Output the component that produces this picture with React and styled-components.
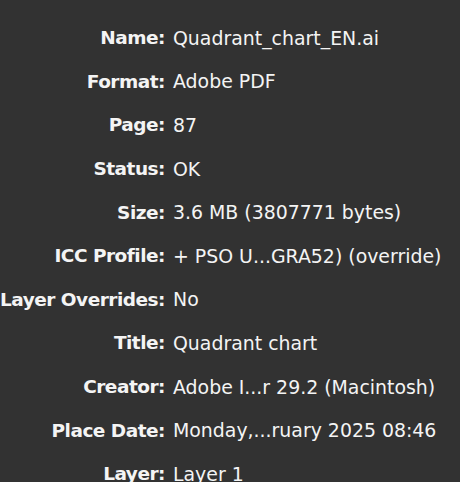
import React from 'react';
import styled, { createGlobalStyle } from 'styled-components';

const GlobalStyle = createGlobalStyle`
  html, body {
    margin: 0;
    padding: 0;
    background: #323232;
    overflow: hidden;
  }
`;

const Panel = styled.section`
  width: 460px;
  height: 482px;
  box-sizing: border-box;
  padding-top: 16px;
  overflow: hidden;
  font-family: "DejaVu Sans", "Open Sans", sans-serif;
  color: #f4f4f4;
`;

const Row = styled.div`
  display: grid;
  grid-template-columns: 165px 1fr;
  column-gap: 8px;
  height: 43.6px;
  align-items: center;
  white-space: nowrap;
`;

const Label = styled.div`
  display: flex;
  justify-content: flex-end;
  font-size: 18.5px;
  font-weight: 700;
  letter-spacing: -0.5px;
`;

const Value = styled.div`
  font-size: 18.9px;
  font-weight: 400;
`;

const fields = [
  ['Name', 'Quadrant_chart_EN.ai'],
  ['Format', 'Adobe PDF'],
  ['Page', '87'],
  ['Status', 'OK'],
  ['Size', '3.6 MB (3807771 bytes)'],
  ['ICC Profile', '+ PSO U...GRA52) (override)'],
  ['Layer Overrides', 'No'],
  ['Title', 'Quadrant chart'],
  ['Creator', 'Adobe I...r 29.2 (Macintosh)'],
  ['Place Date', 'Monday,...ruary 2025 08:46'],
  ['Layer', 'Layer 1'],
];

export default function App() {
  return (
    <>
      <GlobalStyle />
      <Panel>
        {fields.map(([label, value]) => (
          <Row key={label}>
            <Label><span>{label}:</span></Label>
            <Value>{value}</Value>
          </Row>
        ))}
      </Panel>
    </>
  );
}
